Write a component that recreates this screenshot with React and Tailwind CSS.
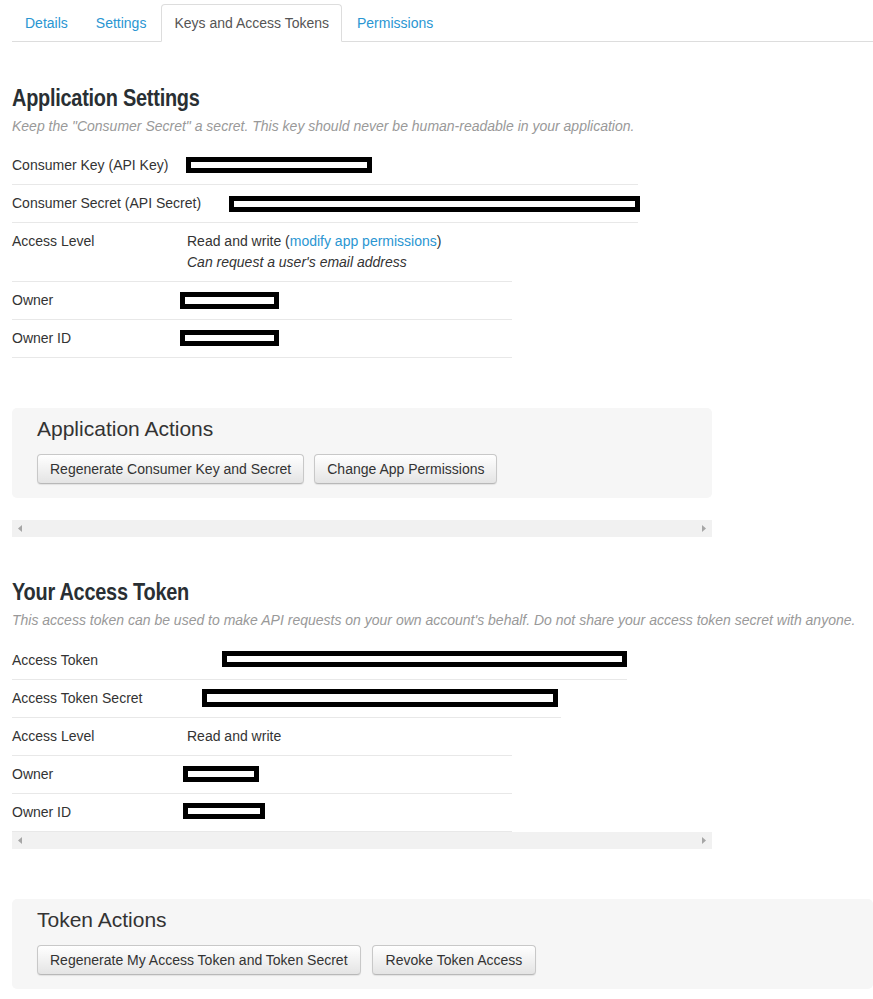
import React from "react";

const LINK = "text-[#2a96d2]";

function Redact({ w, h = 16, mt = 10, ml = 0 }) {
  return (
    <div
      className="border-[5px] border-black bg-white shrink-0"
      style={{ width: w, height: h, marginTop: mt, marginLeft: ml }}
    />
  );
}

function Row({ label, width, children, border = true }) {
  return (
    <div
      className={`flex ${border ? "border-b border-[#e8e8e8]" : ""}`}
      style={{ width }}
    >
      <div className="w-[175px] shrink-0 py-[8px] leading-[21px] whitespace-nowrap">{label}</div>
      <div className="flex-1 flex items-start">{children}</div>
    </div>
  );
}

function Scrollbar() {
  return (
    <div className="w-[700px] h-[17px] bg-[#f1f1f1] flex items-center justify-between px-[6px]">
      <svg width="4" height="7" viewBox="0 0 4 7">
        <path d="M4 0 L0 3.5 L4 7Z" fill="#a6a6a6" />
      </svg>
      <svg width="4" height="7" viewBox="0 0 4 7">
        <path d="M0 0 L4 3.5 L0 7Z" fill="#a6a6a6" />
      </svg>
    </div>
  );
}

function Btn({ children, className = "" }) {
  return (
    <button
      className={`h-[30px] px-[12px] text-[14px] leading-[20px] text-[#333] border border-[#c8c8c8] border-b-[#b8b8b8] rounded-[4px] bg-linear-to-b from-white to-[#e4e4e4] shadow-[0_1px_1px_rgba(0,0,0,0.08)] ${className}`}
    >
      {children}
    </button>
  );
}

function H2({ children }) {
  return (
    <h2 className="font-bold text-[24px] leading-[26px] text-[#292f33] tracking-[-0.3px] scale-x-[0.83] origin-left whitespace-nowrap">
      {children}
    </h2>
  );
}

function Sub({ children }) {
  return (
    <p className="mt-[5px] italic text-[14px] leading-[20px] text-[#999]">
      {children}
    </p>
  );
}

function Panel({ title, width, children }) {
  return (
    <div
      className="bg-[#f6f6f6] rounded-[5px] pl-[25px] pt-[9px] pb-[14px]"
      style={{ width }}
    >
      <h3 className="text-[21px] leading-[24px] text-[#333] font-normal">{title}</h3>
      <div className="mt-[13px] flex">{children}</div>
    </div>
  );
}

export default function App() {
  const tabs = ["Details", "Settings", "Keys and Access Tokens", "Permissions"];
  return (
    <div className="font-['Liberation_Sans',Arial,sans-serif] text-[14px] text-[#333] pl-[12px] bg-white min-h-[999px]">
      <ul className="flex mt-[4px] border-b border-[#ddd]">
        {tabs.map((t, i) => (
          <li key={t} className="mb-[-1px]">
            <a
              className={`block mr-[2px] px-[12px] py-[8px] leading-[20px] border rounded-t-[4px] ${
                i === 2
                  ? "border-[#ddd] border-b-white bg-white text-[#555]"
                  : `border-transparent ${LINK}`
              }`}
            >
              {t}
            </a>
          </li>
        ))}
      </ul>

      <div className="mt-[43px]">
        <H2>Application Settings</H2>
        <Sub>
          Keep the "Consumer Secret" a secret. This key should never be human-readable in
          your application.
        </Sub>
        <div className="mt-[11px]">
          <Row label="Consumer Key (API Key)" width={626}>
            <Redact w={186} mt={10} ml={-1} />
          </Row>
          <Row label="Consumer Secret (API Secret)" width={626}>
            <Redact w={411} mt={11} ml={42} />
          </Row>
          <Row label="Access Level" width={500}>
            <div className="py-[8px] leading-[21px]">
              <div>
                Read and write (<span className={LINK}>modify app permissions</span>)
              </div>
              <div className="italic">Can request a user's email address</div>
            </div>
          </Row>
          <Row label="Owner" width={500}>
            <Redact w={99} h={17} mt={10} ml={-7} />
          </Row>
          <Row label="Owner ID" width={500}>
            <Redact w={99} h={16} mt={10} ml={-7} />
          </Row>
        </div>
      </div>

      <div className="mt-[50px]">
        <Panel title="Application Actions" width={700}>
          <Btn>Regenerate Consumer Key and Secret</Btn>
          <Btn className="ml-[10px]">Change App Permissions</Btn>
        </Panel>
      </div>

      <div className="mt-[22px]">
        <Scrollbar />
      </div>

      <div className="mt-[42px]">
        <H2>Your Access Token</H2>
        <Sub>
          This access token can be used to make API requests on your own account's behalf.
          Do not share your access token secret with anyone.
        </Sub>
        <div className="mt-[12px]">
          <Row label="Access Token" width={615}>
            <Redact w={405} h={16} mt={9} ml={35} />
          </Row>
          <Row label="Access Token Secret" width={549}>
            <Redact w={356} h={18} mt={9} ml={15} />
          </Row>
          <Row label="Access Level" width={500}>
            <div className="py-[8px] leading-[21px]">Read and write</div>
          </Row>
          <Row label="Owner" width={500}>
            <Redact w={76} h={16} mt={10} ml={-4} />
          </Row>
          <Row label="Owner ID" width={500}>
            <Redact w={82} h={16} mt={9} ml={-4} />
          </Row>
        </div>
        <Scrollbar />
      </div>

      <div className="mt-[50px]">
        <Panel title="Token Actions" width={861}>
          <Btn>Regenerate My Access Token and Token Secret</Btn>
          <Btn className="ml-[11px] px-[13px]">Revoke Token Access</Btn>
        </Panel>
      </div>
    </div>
  );
}
